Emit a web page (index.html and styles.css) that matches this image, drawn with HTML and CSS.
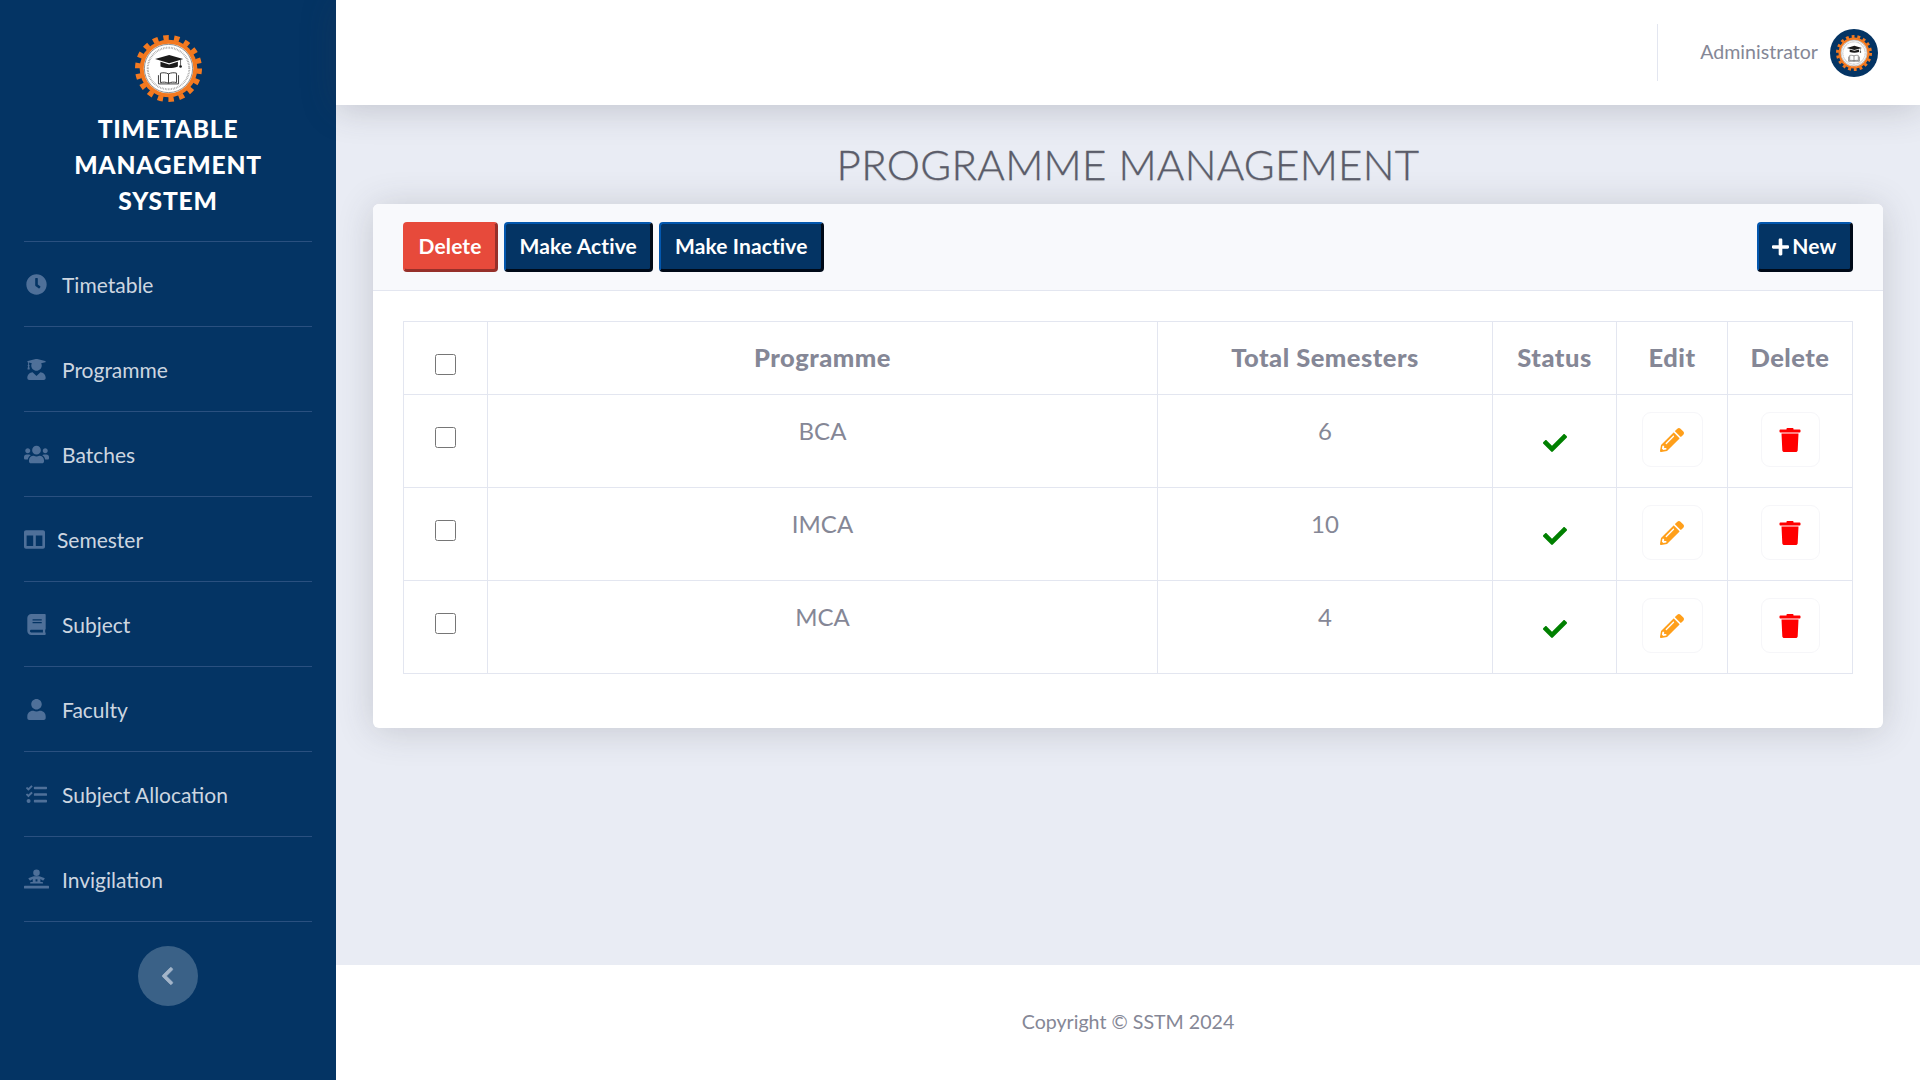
FILE: index.html
```html
<!DOCTYPE html>
<html lang="en">
<head>
<meta charset="utf-8">
<title>Programme Management</title>
<link rel="stylesheet" href="styles.css">
</head>
<body>
<svg class="defs" aria-hidden="true">
  <symbol id="logo" viewBox="0 0 100 100">
    <circle cx="50" cy="50" r="46" fill="none" stroke="#f37920" stroke-width="8" stroke-dasharray="8.03 8.03"/>
    <circle cx="50" cy="50" r="43" fill="#f37920"/>
    <circle cx="50" cy="50" r="37" fill="#fff"/>
    <circle cx="50" cy="50" r="36" fill="none" stroke="#333" stroke-width=".8"/>
    <circle cx="50" cy="50" r="31" fill="none" stroke="#999" stroke-width="3" stroke-dasharray="1 1.4"/>
    <path d="M30 36l21-6 21 6-21 6z" fill="#1a1a1a"/>
    <path d="M38 40v7c8 3 18 3 26 0v-7l-13 4z" fill="#1a1a1a"/>
    <path d="M68 37v9" stroke="#1a1a1a" fill="none"/>
    <circle cx="68" cy="47" r="2" fill="#1a1a1a"/>
    <path d="M50 58c-4-2-9-2-12-1v14c4-1 8-1 12 1 4-2 8-2 12-1V57c-3-1-8-1-12 1zM50 58v14" fill="#fff" stroke="#333" stroke-width="1.4"/>
    <path d="M35 60v13h30V60" fill="none" stroke="#333" stroke-width="1.4"/>
  </symbol>
  <symbol id="i-clock" viewBox="0 0 512 512"><path d="M256,8C119,8,8,119,8,256S119,504,256,504,504,393,504,256,393,8,256,8Zm92.49,313h0l-20,25a16,16,0,0,1-22.49,2.5h0l-67-49.72a40,40,0,0,1-15-31.23V112a16,16,0,0,1,16-16h32a16,16,0,0,1,16,16V256l58,42.5A16,16,0,0,1,348.49,321Z"/></symbol>
  <symbol id="i-grad" viewBox="0 0 448 512"><path d="M319.4 320.6L224 416l-95.4-95.4C57.1 323.7 0 382.2 0 454.4v9.6c0 26.5 21.5 48 48 48h352c26.5 0 48-21.5 48-48v-9.6c0-72.2-57.1-130.7-128.6-133.8zM13.6 79.8l6.4 1.5v58.4c-7 4.2-12 11.5-12 20.3 0 8.4 4.6 15.4 11.1 19.7L3.5 242c-1.7 6.9 2.1 14 7.6 14h41.8c5.5 0 9.3-7.1 7.6-14l-15.6-62.3C51.4 175.4 56 168.4 56 160c0-8.8-5-16.1-12-20.3V87.1l66 15.9c-8.6 17.2-14 36.4-14 57 0 70.7 57.3 128 128 128s128-57.3 128-128c0-20.6-5.3-39.8-14-57l96.3-23.2c18.2-4.4 18.2-27.1 0-31.5l-190.4-46c-13-3.1-26.7-3.1-39.7 0L13.6 48.2c-18.1 4.4-18.1 27.2 0 31.6z"/></symbol>
  <symbol id="i-users" viewBox="0 0 640 512"><path d="M96 224c35.3 0 64-28.7 64-64s-28.7-64-64-64-64 28.7-64 64 28.7 64 64 64zm448 0c35.3 0 64-28.7 64-64s-28.7-64-64-64-64 28.7-64 64 28.7 64 64 64zm32 32h-64c-17.6 0-33.5 7.1-45.1 18.6 40.3 22.1 68.9 62 75.1 109.4h66c17.7 0 32-14.3 32-32v-32c0-35.3-28.7-64-64-64zm-256 0c61.9 0 112-50.1 112-112S381.9 32 320 32 208 82.1 208 144s50.1 112 112 112zm76.8 32h-8.3c-20.8 10-43.9 16-68.5 16s-47.6-6-68.5-16h-8.3C179.6 288 128 339.6 128 403.2V432c0 26.5 21.5 48 48 48h288c26.5 0 48-21.5 48-48v-28.8c0-63.6-51.6-115.2-115.2-115.2zm-223.7-13.4C161.5 263.1 145.6 256 128 256H64c-35.3 0-64 28.7-64 64v32c0 17.7 14.3 32 32 32h65.9c6.3-47.4 34.9-87.3 75.2-109.4z"/></symbol>
  <symbol id="i-columns" viewBox="0 0 512 512"><path d="M464 32H48C21.49 32 0 53.49 0 80v352c0 26.51 21.49 48 48 48h416c26.51 0 48-21.49 48-48V80c0-26.51-21.49-48-48-48zM224 416H64V160h160v256zm224 0H288V160h160v256z"/></symbol>
  <symbol id="i-book" viewBox="0 0 448 512"><path d="M448 360V24c0-13.3-10.7-24-24-24H96C43 0 0 43 0 96v320c0 53 43 96 96 96h328c13.3 0 24-10.7 24-24v-16c0-7.5-3.5-14.3-8.9-18.7-4.2-15.4-4.2-59.3 0-74.7 5.4-4.3 8.9-11.1 8.9-18.6zM128 134c0-3.3 2.7-6 6-6h212c3.3 0 6 2.7 6 6v20c0 3.3-2.7 6-6 6H134c-3.3 0-6-2.7-6-6v-20zm0 64c0-3.3 2.7-6 6-6h212c3.3 0 6 2.7 6 6v20c0 3.3-2.7 6-6 6H134c-3.3 0-6-2.7-6-6v-20zm253.4 250H96c-17.7 0-32-14.3-32-32 0-17.6 14.4-32 32-32h285.4c-1.9 17.1-1.9 46.9 0 64z"/></symbol>
  <symbol id="i-user" viewBox="0 0 448 512"><path d="M224 256c70.7 0 128-57.3 128-128S294.7 0 224 0 96 57.3 96 128s57.3 128 128 128zm89.6 32h-16.7c-22.2 10.2-46.9 16-72.9 16s-50.6-5.8-72.9-16h-16.7C60.2 288 0 348.2 0 422.4V464c0 26.5 21.5 48 48 48h352c26.5 0 48-21.5 48-48v-41.6c0-74.2-60.2-134.4-134.4-134.4z"/></symbol>
  <symbol id="i-tasks" viewBox="0 0 512 512"><path d="M139.61 35.5a12 12 0 0 0-17 0L58.93 98.81l-22.7-22.12a12 12 0 0 0-17 0L3.53 92.41a12 12 0 0 0 0 17l47.59 47.4a12.78 12.78 0 0 0 17.61 0l15.59-15.62L156.52 69a12.09 12.09 0 0 0 .09-17zm0 159.19a12 12 0 0 0-17 0l-63.68 63.72-22.7-22.1a12 12 0 0 0-17 0L3.53 252a12 12 0 0 0 0 17L51 316.5a12.77 12.77 0 0 0 17.6 0l15.7-15.69 72.2-72.22a12 12 0 0 0 .09-16.9zM64 368c-26.49 0-48.59 21.5-48.59 48S37.53 464 64 464a48 48 0 0 0 0-96zm432 16H208a16 16 0 0 0-16 16v32a16 16 0 0 0 16 16h288a16 16 0 0 0 16-16v-32a16 16 0 0 0-16-16zm0-320H208a16 16 0 0 0-16 16v32a16 16 0 0 0 16 16h288a16 16 0 0 0 16-16V80a16 16 0 0 0-16-16zm0 160H208a16 16 0 0 0-16 16v32a16 16 0 0 0 16 16h288a16 16 0 0 0 16-16v-32a16 16 0 0 0-16-16z"/></symbol>
  <symbol id="i-invig" viewBox="0 0 640 512"><path d="M320 0a84 84 0 1 1 0 168 84 84 0 0 1 0-168zM210 186c20-8 60-12 110-12s90 4 110 12l90 30c12 5 14 20 4 28l-24 30c-8 10-22 10-30 2l-50-30v74h50c9 0 16 7 16 16v24H158v-24c0-9 7-16 16-16h50v-74l-50 30c-8 8-22 8-30-2l-24-30c-10-8-8-23 4-28zM296 250v60h48v-60zM16 416h608c9 0 16 7 16 16v40c0 9-7 16-16 16H16c-9 0-16-7-16-16v-40c0-9 7-16 16-16z" fill-rule="evenodd"/></symbol>
  <symbol id="i-check" viewBox="0 0 512 512"><path d="M173.898 439.404l-166.4-166.4c-9.997-9.997-9.997-26.206 0-36.204l36.203-36.204c9.997-9.998 26.207-9.998 36.204 0L192 312.69 432.095 72.596c9.997-9.997 26.207-9.997 36.204 0l36.203 36.204c9.997 9.997 9.997 26.206 0 36.204l-294.4 294.401c-9.998 9.997-26.207 9.997-36.204-.001z"/></symbol>
  <symbol id="i-pencil" viewBox="0 0 512 512"><path d="M497.9 142.1l-46.1 46.1c-4.7 4.7-12.3 4.7-17 0l-111-111c-4.7-4.7-4.7-12.3 0-17l46.1-46.1c18.7-18.7 49.1-18.7 67.9 0l60.1 60.1c18.8 18.7 18.8 49.1 0 67.9zM284.2 99.8L21.6 362.4.4 483.9c-2.9 16.4 11.4 30.6 27.8 27.8l121.5-21.3 262.6-262.6c4.7-4.7 4.7-12.3 0-17l-111-111c-4.8-4.7-12.4-4.7-17.1 0zM124.1 339.9c-5.5-5.5-5.5-14.3 0-19.8l154-154c5.5-5.5 14.3-5.5 19.8 0s5.5 14.3 0 19.8l-154 154c-5.5 5.5-14.3 5.5-19.8 0zM88 424h48v36.3l-64.5 11.3-31.1-31.1L51.7 376H88v48z"/></symbol>
  <symbol id="i-trash" viewBox="0 0 21 24"><path d="M7 1c0-.6.4-1 1-1h5c.6 0 1 .4 1 1v.5h6.200c.4 0 .8.4.8.8v1.400c0 .4-.4.8-.8.8H.8C.4 4.500 0 4.100 0 3.700V2.300c0-.4.4-.8.8-.8H7zM2 5.500h17l-.8 16.700c-.1 1-.9 1.800-2 1.800H4.800c-1.100 0-1.900-.8-2-1.800z"/></symbol>
  <symbol id="i-chev" viewBox="0 0 320 512"><path d="M34.52 239.03L228.87 44.69c9.37-9.37 24.57-9.37 33.94 0l22.67 22.67c9.36 9.36 9.38 24.52.04 33.9L131.49 256l154.02 154.75c9.34 9.38 9.32 24.54-.04 33.9l-22.67 22.67c-9.37 9.37-24.57 9.37-33.94 0L34.52 272.97c-9.37-9.37-9.37-24.57 0-33.94z"/></symbol>
  <symbol id="i-plus" viewBox="0 0 448 512"><path d="M416 208H272V64c0-17.67-14.33-32-32-32h-32c-17.67 0-32 14.33-32 32v144H32c-17.67 0-32 14.33-32 32v32c0 17.67 14.33 32 32 32h144v144c0 17.67 14.33 32 32 32h32c17.67 0 32-14.33 32-32V304h144c17.67 0 32-14.33 32-32v-32c0-17.67-14.33-32-32-32z"/></symbol>
</svg>

<div class="app">
  <aside class="sidebar">
    <div class="brand">
      <svg class="brand-logo"><use href="#logo"/></svg>
      <div class="brand-title">Timetable<br>Management<br>System</div>
    </div>
    <nav class="nav">
      <a class="nav-item"><span class="nav-icon"><svg class="ic-clock"><use href="#i-clock"/></svg></span><span>Timetable</span></a>
      <a class="nav-item"><span class="nav-icon"><svg class="ic-tall"><use href="#i-grad"/></svg></span><span>Programme</span></a>
      <a class="nav-item"><span class="nav-icon"><svg class="ic-wide"><use href="#i-users"/></svg></span><span>Batches</span></a>
      <a class="nav-item"><span class="nav-icon nav-icon-narrow"><svg class="ic-clock"><use href="#i-columns"/></svg></span><span>Semester</span></a>
      <a class="nav-item"><span class="nav-icon"><svg class="ic-tall"><use href="#i-book"/></svg></span><span>Subject</span></a>
      <a class="nav-item"><span class="nav-icon"><svg class="ic-tall"><use href="#i-user"/></svg></span><span>Faculty</span></a>
      <a class="nav-item"><span class="nav-icon"><svg class="ic-clock"><use href="#i-tasks"/></svg></span><span>Subject Allocation</span></a>
      <a class="nav-item"><span class="nav-icon"><svg class="ic-wide"><use href="#i-invig"/></svg></span><span>Invigilation</span></a>
    </nav>
    <button class="toggle" type="button"><svg class="toggle-icon"><use href="#i-chev"/></svg></button>
  </aside>

  <div class="main">
    <header class="topbar">
      <div class="topbar-divider"></div>
      <span class="user-name">Administrator</span>
      <span class="avatar"><svg class="avatar-logo"><use href="#logo"/></svg></span>
    </header>

    <main class="content">
      <h1 class="page-title">PROGRAMME MANAGEMENT</h1>
      <section class="card">
        <div class="card-head">
          <div class="btn-group">
            <button class="btn btn-red" type="button">Delete</button>
            <button class="btn btn-navy" type="button">Make Active</button>
            <button class="btn btn-navy" type="button">Make Inactive</button>
          </div>
          <button class="btn btn-navy btn-new" type="button"><svg class="plus"><use href="#i-plus"/></svg>New</button>
        </div>
        <div class="card-body">
          <table class="grid">
            <colgroup>
              <col class="c1"><col class="c2"><col class="c3"><col class="c4"><col class="c5"><col class="c6">
            </colgroup>
            <thead>
              <tr>
                <th><input class="chk" type="checkbox"></th>
                <th>Programme</th>
                <th>Total Semesters</th>
                <th>Status</th>
                <th>Edit</th>
                <th>Delete</th>
              </tr>
            </thead>
            <tbody>
              <tr>
                <td><input class="chk" type="checkbox"></td>
                <td>BCA</td>
                <td>6</td>
                <td class="mid"><svg class="ic-check"><use href="#i-check"/></svg></td>
                <td class="act"><span class="act-box edit"><svg class="ic-act"><use href="#i-pencil"/></svg></span></td>
                <td class="act"><span class="act-box del"><svg class="ic-act"><use href="#i-trash"/></svg></span></td>
              </tr>
              <tr>
                <td><input class="chk" type="checkbox"></td>
                <td>IMCA</td>
                <td>10</td>
                <td class="mid"><svg class="ic-check"><use href="#i-check"/></svg></td>
                <td class="act"><span class="act-box edit"><svg class="ic-act"><use href="#i-pencil"/></svg></span></td>
                <td class="act"><span class="act-box del"><svg class="ic-act"><use href="#i-trash"/></svg></span></td>
              </tr>
              <tr>
                <td><input class="chk" type="checkbox"></td>
                <td>MCA</td>
                <td>4</td>
                <td class="mid"><svg class="ic-check"><use href="#i-check"/></svg></td>
                <td class="act"><span class="act-box edit"><svg class="ic-act"><use href="#i-pencil"/></svg></span></td>
                <td class="act"><span class="act-box del"><svg class="ic-act"><use href="#i-trash"/></svg></span></td>
              </tr>
            </tbody>
          </table>
        </div>
      </section>
    </main>

    <footer class="footer">Copyright © SSTM 2024</footer>
  </div>
</div>
</body>
</html>
```

FILE: styles.css
```css
* { box-sizing: border-box; }
html, body { margin: 0; height: 100%; }
body {
  font-family: Lato, "Noto Sans", sans-serif;
  color: #858796;
  background: #e9ecf4;
  overflow: hidden;
}
.defs { display: none; }
.app { display: flex; height: 1080px; }

/* Sidebar */
.sidebar {
  width: 336px;
  flex: none;
  background: #043464;
  display: flex;
  flex-direction: column;
  align-items: center;
}
.brand {
  width: 288px;
  height: 242px;
  padding-top: 35px;
  border-bottom: 1px solid #2a5080;
  display: flex;
  flex-direction: column;
  align-items: center;
}
.brand-logo { width: 67px; height: 67px; flex: none; }
.brand-title {
  margin-top: 9px;
  font-size: 24.600px;
  font-weight: 900;
  line-height: 36px;
  letter-spacing: .8px;
  text-align: center;
  text-transform: uppercase;
  color: #fff;
}
.nav { width: 288px; display: flex; flex-direction: column; }
.nav-item {
  height: 85px;
  border-bottom: 1px solid #2a5080;
  display: flex;
  align-items: center;
  gap: 13px;
  font-size: 21px;
  color: #cdd6e0;
}
.nav-icon {
  width: 25px;
  display: flex;
  justify-content: center;
  fill: #4f7099;
  flex: none;
}
.nav-icon-narrow { width: 21px; justify-content: flex-start; margin-right: -1px; }
.ic-clock { width: 21px; height: 21px; }
.ic-tall { width: 19px; height: 21px; }
.ic-wide { width: 25px; height: 21px; }
.toggle {
  width: 60px;
  height: 60px;
  margin-top: 24px;
  border: 0;
  padding: 0 2px 0 0;
  border-radius: 50%;
  background: #3a6187;
  display: flex;
  align-items: center;
  justify-content: center;
}
.toggle-icon { width: 13px; height: 20px; fill: #a3b5c9; stroke: #a3b5c9; stroke-width: 20px; }

/* Main column */
.main { flex: 1; min-width: 0; display: flex; flex-direction: column; }
.topbar {
  height: 105px;
  flex: none;
  background: #fff;
  box-shadow: 0 3px 36px rgba(58, 59, 69, .24);
  display: flex;
  align-items: center;
  justify-content: flex-end;
  padding-right: 42px;
  position: relative;
}
.topbar-divider { width: 1px; height: 57px; background: #e3e6f0; margin-right: 42px; }
.user-name { font-size: 19.600px; color: #858796; margin-right: 12px; padding-bottom: 3px; }
.avatar {
  width: 48px;
  height: 48px;
  border-radius: 50%;
  background: #043464;
  display: flex;
  align-items: center;
  justify-content: center;
}
.avatar-logo { width: 36px; height: 36px; }

.content { flex: 1; padding: 0 37px; min-height: 0; }
.page-title {
  margin: 29px 0 10px;
  height: 60px;
  font-size: 42px;
  font-weight: 300;
  line-height: 60px;
  letter-spacing: .3px;
  text-align: center;
  color: #5a5c69;
  -webkit-text-stroke: .3px #5a5c69;
  text-shadow: 0 1px 1px rgba(90, 92, 105, .25);
}
.card {
  background: #fff;
  border-radius: 6px;
  box-shadow: 0 3px 36px rgba(58, 59, 69, .2);
  overflow: hidden;
}
.card-head {
  height: 87px;
  padding: 18px 30px 0;
  background: #f8f9fc;
  border-bottom: 1px solid #e3e6f0;
  display: flex;
  justify-content: space-between;
  align-items: flex-start;
}
.btn-group { display: flex; gap: 6px; }
.btn {
  height: 50px;
  padding: 0 13.500px 2px;
  font-family: inherit;
  font-size: 21px;
  font-weight: 700;
  letter-spacing: .12px;
  color: #fff;
  border-radius: 4px;
  border-style: solid;
  border-width: 2px 3px 3px 2px;
  display: inline-flex;
  align-items: center;
}
.btn-red { background: #e74a3b; border-color: #e74a3b #96302a #96302a #e74a3b; }
.btn-navy { background: #043464; border-color: #0357ae #000a18 #000a18 #0357ae; }
.plus { width: 17px; height: 20px; fill: #fff; margin: 2px 3px 0 0; }
.card-body { padding: 30px 30px 54px; }

/* Table */
.grid {
  width: 1449px;
  table-layout: fixed;
  border-collapse: collapse;
  color: #858796;
  font-size: 24px;
  line-height: 36px;
}
.c1 { width: 84px; }
.c2 { width: 670px; }
.c3 { width: 335px; }
.c4 { width: 124px; }
.c5 { width: 111px; }
.c6 { width: 125px; }
.grid th, .grid td {
  border: 1px solid #e3e6f0;
  padding: 18px 0;
  text-align: center;
  vertical-align: top;
}
.grid th { padding-top: 17px; font-size: 25.500px; font-weight: 900; letter-spacing: .5px; height: 73px; }
.grid td { height: 93px; }
.chk { width: 21px; height: 21px; margin: 14px auto 0; display: block; }
.grid th .chk { margin-top: 15px; }
.grid td.mid { padding-top: 36px; }
.ic-check { width: 24px; height: 24px; fill: #008000; display: block; margin: 0 auto; }
.grid td.act { padding-top: 17px; }
.act-box {
  height: 55px;
  display: flex;
  align-items: center;
  justify-content: center;
  border: 1px solid #f6f6f9;
  border-radius: 9px;
  margin: 0 auto;
}
.edit { width: 61px; fill: #ff9f1a; }
.del { width: 59px; fill: #ff0000; }
.ic-act { width: 24px; height: 24px; }

.footer {
  height: 115px;
  flex: none;
  background: #fff;
  display: flex;
  align-items: center;
  justify-content: center;
  font-size: 19.600px;
  color: #858796;
  padding-bottom: 3px;
}
```
